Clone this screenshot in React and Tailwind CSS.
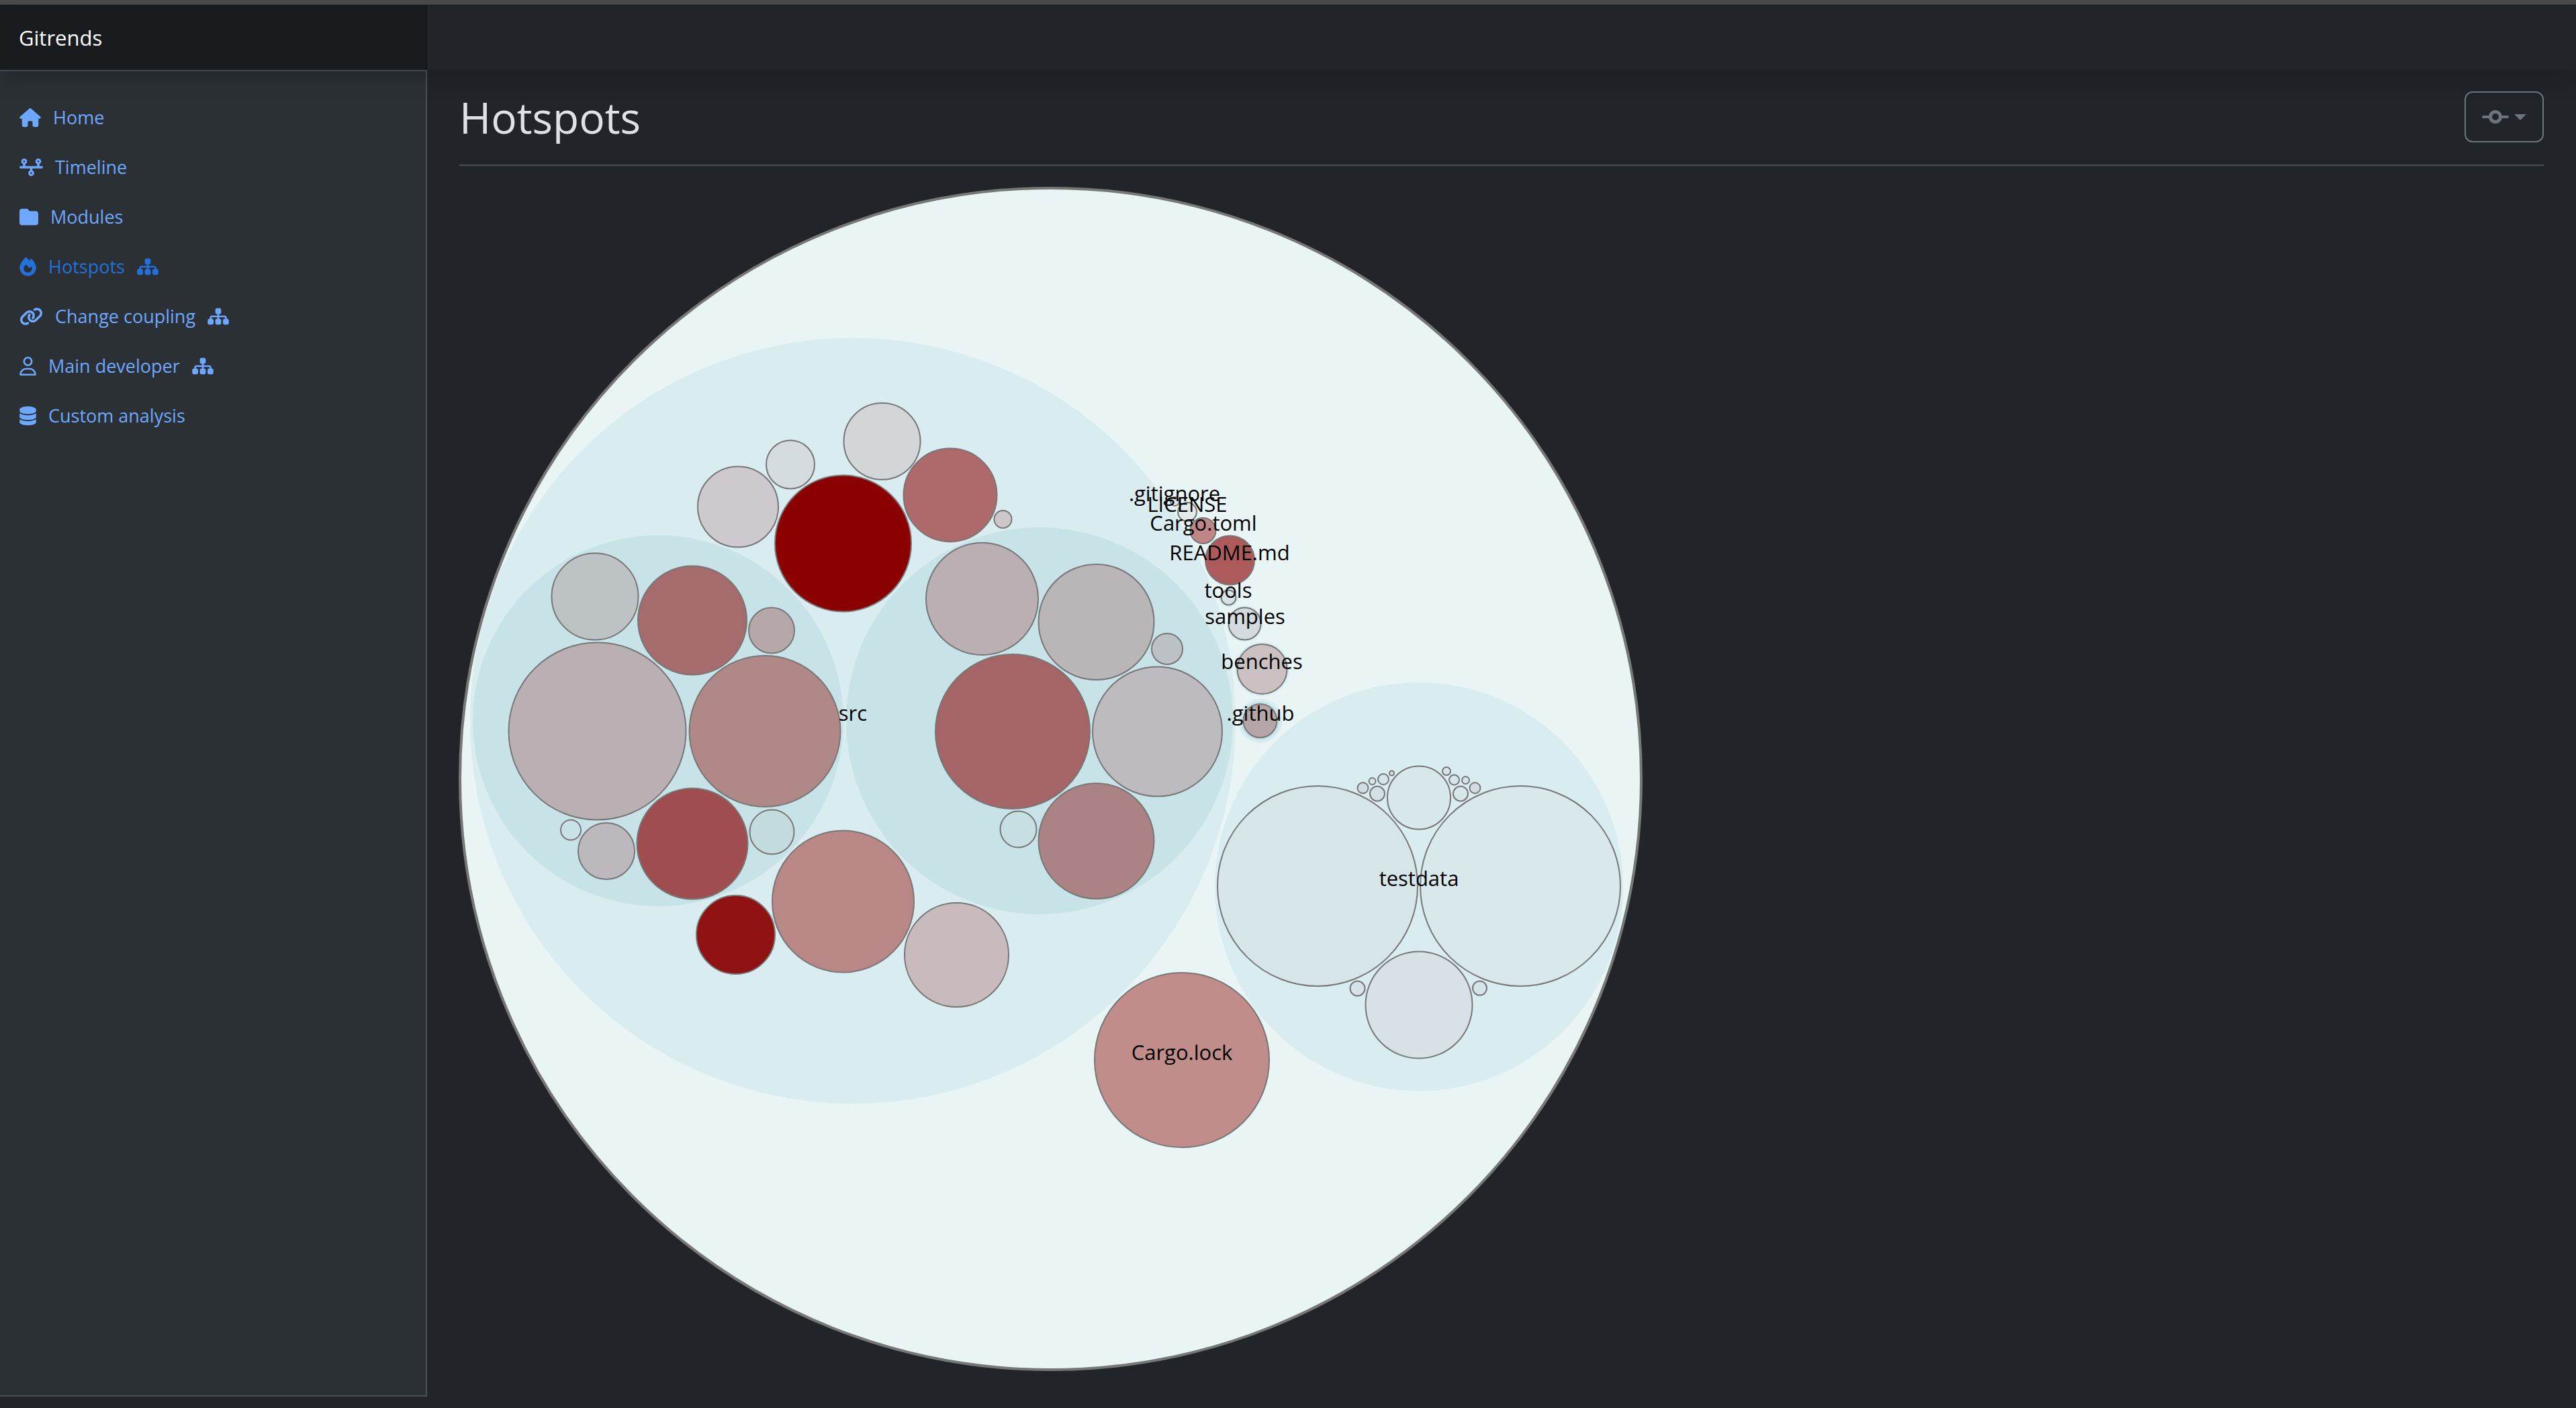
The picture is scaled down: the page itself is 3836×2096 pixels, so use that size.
import {
  FaCodeCommit,
  FaDatabase,
  FaFire,
  FaFolder,
  FaHouse,
  FaLink,
  FaRegUser,
  FaSitemap,
  FaTimeline,
} from "react-icons/fa6";

const NAV_ITEMS = [
  { label: "Home", icon: FaHouse, size: "h-7 w-8" },
  { label: "Timeline", icon: FaTimeline, size: "h-7 w-[35px]" },
  { label: "Modules", icon: FaFolder, size: "h-7 w-7" },
  { label: "Hotspots", icon: FaFire, size: "h-7 w-[25px]", tree: true, active: true },
  { label: "Change coupling", icon: FaLink, size: "h-7 w-[35px]", tree: true },
  { label: "Main developer", icon: FaRegUser, size: "h-7 w-[25px]", tree: true },
  { label: "Custom analysis", icon: FaDatabase, size: "h-7 w-[25px]" },
];

// Directories: [cx, cy, r, fill]
const FOLDERS = [
  [586, 794, 570, "#d9ecf0"],
  [296, 794, 276, "#c8e3e7"],
  [864, 794, 288, "#c8e3e7"],
  [1429, 1041, 304, "#d9ecf0"],
  [1145.5, 610.5, 14.5, "#d9ecf0"],
  [1169.5, 649.5, 27, "#d9ecf0"],
  [1195.5, 717, 40.5, "#d9ecf0"],
  [1192.5, 794, 33, "#d9ecf0"],
  [1192.5, 794, 29, "#c8e3e7"],
];

// Files: [cx, cy, r, fill]
const FILES = [
  [202, 609, 64.5, "#bdc2c5"],
  [347, 644.5, 81, "#a66b6d"],
  [465, 659.5, 34, "#b6a7a8"],
  [205.5, 809.5, 132, "#bab0b4"],
  [455, 809.5, 112.5, "#b08888"],
  [347, 977, 82.5, "#9f4d4f"],
  [166, 956.5, 15, "#c8e2e6"],
  [219, 988, 42, "#bdb8bd"],
  [465.5, 959.5, 33, "#c4dbdd"],
  [415, 475.5, 60, "#cec9ce"],
  [493, 412.5, 36, "#d4dcdf"],
  [629.5, 378, 57, "#d2d6d9"],
  [571.5, 530, 101.5, "#8b0000"],
  [731, 458, 69.5, "#ae696a"],
  [809.5, 494, 13, "#cdc7cb"],
  [778.5, 612.5, 83.5, "#bab0b4"],
  [948.5, 647, 86, "#bab5b7"],
  [1054, 687, 23, "#bbc1c4"],
  [824, 810, 115, "#a56466"],
  [1039.5, 810, 96.5, "#bdbbbf"],
  [832.5, 955.5, 27, "#c6dfe3"],
  [948.5, 973, 86, "#ac8384"],
  [411.5, 1112.5, 58.5, "#8f1112"],
  [571.5, 1063, 105.5, "#b88786"],
  [740.5, 1142.5, 77.5, "#c9babd"],
  [1278, 1040, 149, "#d5e5e8"],
  [1580, 1040, 149, "#d8e8eb"],
  [1429, 908.5, 47, "#d7e7ea"],
  [1429, 1217, 79.5, "#d7e1e6"],
  [1337.5, 1192.5, 11, "#d5e4e8"],
  [1519.5, 1192, 10.5, "#d5e4e8"],
  [1345.5, 894, 8, "#d0dde3"],
  [1367, 902.5, 11, "#d2e0e5"],
  [1359.5, 884, 5, "#d5e4e8"],
  [1376, 881, 8, "#d5e4e8"],
  [1388.5, 872, 3.5, "#d5e4e8"],
  [1470, 869, 6, "#d5e4e8"],
  [1481.5, 882, 7.5, "#d5e4e8"],
  [1498.5, 882.5, 5.5, "#d5e4e8"],
  [1512.5, 894, 8, "#d0dde3"],
  [1491, 902.5, 11, "#d7e7ea"],
  [1065.5, 467.5, 6.5, "#dde3e4"],
  [1084, 483, 14, "#e2e9eb"],
  [1107.5, 511, 19, "#c08686"],
  [1147.5, 555, 36.5, "#ad5a5b"],
  [1145.5, 610.5, 11, "#d5e2e6"],
  [1169.5, 649.5, 24, "#d3dbdf"],
  [1195.5, 717, 37, "#cbc1c3"],
  [1192.5, 794, 25, "#b5a5a7"],
  [1076, 1299, 130, "#c08d8b"],
];

// Top-level entries: [text, cx, baseline]
const LABELS = [
  ["src", 586, 794],
  ["testdata", 1429, 1040],
  ["Cargo.lock", 1076, 1299],
  [".gitignore", 1065, 467],
  ["LICENSE", 1084, 483],
  ["Cargo.toml", 1108, 511],
  ["README.md", 1147, 555],
  ["tools", 1145, 611],
  ["samples", 1170, 650],
  ["benches", 1195, 717],
  [".github", 1193, 794],
];

function NavItem({ label, icon: Icon, size, tree, active }) {
  return (
    <li>
      <a
        href="#"
        aria-current={active ? "page" : undefined}
        className={
          active
            ? "flex items-center gap-[18px] py-4 text-[27px] leading-[42px] text-[#2470dc]"
            : "flex items-center gap-[18px] py-4 text-[27px] leading-[42px] text-[#6ea8fe]"
        }
      >
        <span className="flex shrink-0">
          <Icon className={size} aria-hidden="true" />
        </span>
        {label}
        {tree && <FaSitemap className="h-7 w-8 shrink-0" aria-hidden="true" />}
      </a>
    </li>
  );
}

function HotspotChart() {
  return (
    <svg
      viewBox="0 0 1760 1760"
      className="block w-full max-w-[1760px] overflow-visible"
      role="img"
      aria-label="Hotspots"
    >
      <circle cx="880.5" cy="880.5" r="879.5" fill="#e9f5f5" stroke="#777777" strokeWidth="4" />
      {FOLDERS.map(([cx, cy, r, fill], i) => (
        <circle key={i} cx={cx} cy={cy} r={r} fill={fill} />
      ))}
      <g stroke="#777777" strokeWidth="2">
        {FILES.map(([cx, cy, r, fill], i) => (
          <circle key={i} cx={cx} cy={cy} r={r} fill={fill} />
        ))}
      </g>
      <g textAnchor="middle" className="fill-black text-[31px]">
        {LABELS.map(([text, x, y]) => (
          <text key={text} x={x} y={y}>
            {text}
          </text>
        ))}
      </g>
    </svg>
  );
}

export default function App() {
  return (
    <div className="flex min-h-screen flex-col bg-[#212529] font-['Open_Sans','Noto_Sans',sans-serif] text-[#dee2e6]">
      <div className="h-2 border-b border-[#16181b] bg-[#4a4a4a]" />
      <header className="relative z-10 flex h-24 bg-[#212529] shadow-[0_16px_32px_rgba(0,0,0,0.15)]">
        <a
          href="#"
          className="flex w-[636px] items-center bg-[#191c1f] px-7 text-[31px] leading-[48px] text-white shadow-[inset_-2px_0_0_rgba(0,0,0,0.25)]"
        >
          Gitrends
        </a>
      </header>
      <div className="flex flex-1">
        <aside className="mb-[17px] w-[636px] shrink-0 border-y-2 border-r-2 border-[#495057] bg-[#2b3035]">
          <nav aria-label="Main" className="px-[29px] pt-8">
            <ul>
              {NAV_ITEMS.map((item) => (
                <NavItem key={item.label} {...item} />
              ))}
            </ul>
          </nav>
        </aside>
        <main className="min-w-0 flex-1 px-12 pt-8">
          <div className="mb-8 flex items-start justify-between border-b-2 border-[#495057] pb-8">
            <h1 className="text-[64px] leading-[77px]">Hotspots</h1>
            <button
              type="button"
              aria-label="Commit"
              className="flex h-[76px] items-center gap-2 rounded-xl border-2 border-[#6c757d] px-6 text-[#6c757d]"
            >
              <FaCodeCommit className="h-8 w-10" aria-hidden="true" />
              <svg viewBox="0 0 18 9" className="h-[9px] w-[18px] fill-current" aria-hidden="true">
                <path d="M0 0h18L9 9z" />
              </svg>
            </button>
          </div>
          <HotspotChart />
        </main>
      </div>
    </div>
  );
}
